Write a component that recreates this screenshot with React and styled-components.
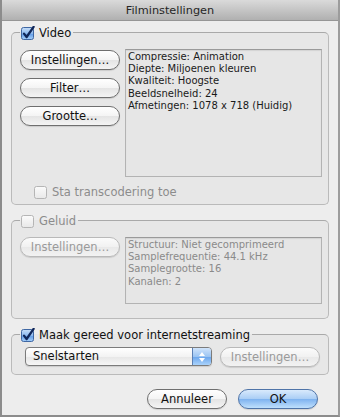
import styled, { createGlobalStyle } from 'styled-components'

const GlobalStyle = createGlobalStyle`
  html, body {
    margin: 0;
    padding: 0;
    background: #ededed;
  }
  body {
    font-family: "DejaVu Sans", "Liberation Sans", sans-serif;
  }
`

const Window = styled.div`
  width: 340px;
  height: 417px;
  box-sizing: border-box;
  border-left: 2px solid #8c8c8c;
  border-right: 2px solid #9c9c9c;
  border-bottom: 2px solid #8c8c8c;
  background: #ededed;
  display: flex;
  flex-direction: column;
`

const TitleBar = styled.div`
  height: 21px;
  box-sizing: border-box;
  flex-shrink: 0;
  border-bottom: 1px solid #969696;
  background: linear-gradient(#dadada, #b0b0b0);
  display: flex;
  align-items: center;
  justify-content: center;
  font-size: 11.3px;
  color: #262626;
`

const Body = styled.div`
  display: flex;
  flex-direction: column;
  gap: 8px;
  padding: 4px 9px 0 9px;
`

const Group = styled.fieldset`
  margin: 0;
  padding: 0;
  min-width: 0;
  border: 1px solid #bababa;
  border-top-color: #a9a9a9;
  border-radius: 5px;
  background: #e7e7e7;
`

const Legend = styled.legend`
  margin-left: 8px;
  padding: 0 2px 0 1px;
  height: 14px;
`

const LegendInner = styled.span`
  display: inline-flex;
  align-items: center;
  gap: 4px;
  height: 14px;
  font-size: 11.5px;
  color: ${p => (p.$disabled ? '#8c8c8c' : '#111')};
`

const Content = styled.div`
  padding: ${p => p.$pad};
  display: flex;
  flex-direction: column;
`

const Row = styled.div`
  display: flex;
  align-items: flex-start;
  gap: ${p => p.$gap || '5px'};
`

const ButtonColumn = styled.div`
  display: flex;
  flex-direction: column;
  gap: 8px;
  margin-top: 1px;
`

const PushButton = styled.button`
  width: ${p => p.$width || '100px'};
  height: 20px;
  box-sizing: border-box;
  padding: 0;
  border-radius: 10px;
  border: 1px solid ${p => (p.disabled ? '#b9b9b9' : '#6f6f6f')};
  background: ${p =>
    p.disabled
      ? 'linear-gradient(#fbfbfb, #f1f1f1 50%, #e9e9e9 51%, #f2f2f2)'
      : 'linear-gradient(#ffffff, #f4f4f4 50%, #e4e4e4 51%, #f4f4f4)'};
  font-family: "DejaVu Sans", "Liberation Sans", sans-serif;
  font-size: 11.5px;
  color: ${p => (p.disabled ? '#9a9a9a' : '#111')};
  box-shadow: 0 1px 1px rgba(0, 0, 0, 0.12);
  flex-shrink: 0;
`

const DefaultButton = styled(PushButton)`
  border-color: #4f74a8;
  background: linear-gradient(#d9eafc, #a9cdf5 50%, #7eb2ef 51%, #bfe0fd);
`

const InfoBox = styled.div`
  flex: 1;
  height: ${p => p.$height};
  box-sizing: border-box;
  border: 1px solid #b3b3b3;
  border-top-color: #9a9a9a;
  background: #e6e6e6;
  padding: 1px 2px;
  font-size: 10px;
  line-height: 12.2px;
  color: ${p => (p.$disabled ? '#8a8a8a' : '#1a1a1a')};
  box-shadow: inset 0 1px 1px rgba(0, 0, 0, 0.08);
`

const CheckRow = styled.div`
  display: flex;
  align-items: center;
  gap: 4px;
  margin-top: 8px;
  margin-left: 14px;
  height: 14px;
  font-size: 11.5px;
  color: #8c8c8c;
`

const Popup = styled.div`
  width: 187px;
  height: 19px;
  box-sizing: border-box;
  border: 1px solid #7b7b7b;
  border-radius: 4px;
  display: flex;
  overflow: hidden;
  background: linear-gradient(#ffffff, #f3f3f3 50%, #e6e6e6 51%, #f6f6f6);
  box-shadow: 0 1px 1px rgba(0, 0, 0, 0.12);
  flex-shrink: 0;
`

const PopupLabel = styled.span`
  flex: 1;
  padding-left: 7px;
  font-size: 11.5px;
  line-height: 17px;
  color: #111;
`

const PopupArrows = styled.span`
  width: 18px;
  border-left: 1px solid #5b80b5;
  background: linear-gradient(#d0e4fb, #9cc5f3 50%, #6aa5ec 51%, #a9d2fb);
  display: flex;
  align-items: center;
  justify-content: center;
`

const Footer = styled.div`
  display: flex;
  justify-content: flex-end;
  gap: 11px;
  margin-top: 6px;
  padding-right: 11px;
`

function CheckBox({ checked, disabled }) {
  if (checked) {
    return (
      <svg width="14" height="14" viewBox="0 0 14 14">
        <defs>
          <linearGradient id="cbOn" x1="0" y1="0" x2="0" y2="1">
            <stop offset="0" stopColor="#c7def8" />
            <stop offset="0.5" stopColor="#8dbaf0" />
            <stop offset="0.51" stopColor="#5f9ae6" />
            <stop offset="1" stopColor="#a6d0fa" />
          </linearGradient>
        </defs>
        <rect x="0.5" y="1.5" width="12" height="12" rx="2" fill="url(#cbOn)" stroke="#3f67a3" />
        <path d="M3 7.6 L5.6 11 L12.6 0.8" fill="none" stroke="#10275a" strokeWidth="2.3" strokeLinecap="round" strokeLinejoin="round" />
      </svg>
    )
  }
  return (
    <svg width="14" height="14" viewBox="0 0 14 14">
      <defs>
        <linearGradient id="cbOff" x1="0" y1="0" x2="0" y2="1">
          <stop offset="0" stopColor="#fbfbfb" />
          <stop offset="1" stopColor="#e8e8e8" />
        </linearGradient>
      </defs>
      <rect x="0.5" y="1.5" width="12" height="12" rx="2" fill="url(#cbOff)" stroke={disabled ? '#b5b5b5' : '#8a8a8a'} />
    </svg>
  )
}

function Arrows() {
  return (
    <svg width="8" height="12" viewBox="0 0 8 12">
      <path d="M4 1 L7 5 L1 5 Z" fill="#ffffff" />
      <path d="M4 11 L7 7 L1 7 Z" fill="#ffffff" />
    </svg>
  )
}

export default function App() {
  return (
    <>
      <GlobalStyle />
      <Window>
        <TitleBar>Filminstellingen</TitleBar>
        <Body>
          <Group>
            <Legend>
              <LegendInner>
                <CheckBox checked />
                Video
              </LegendInner>
            </Legend>
            <Content $pad="10px 6px 5px 8px">
              <Row>
                <ButtonColumn>
                  <PushButton>Instellingen…</PushButton>
                  <PushButton>Filter…</PushButton>
                  <PushButton>Grootte…</PushButton>
                </ButtonColumn>
                <InfoBox $height="128px">
                  Compressie: Animation<br />
                  Diepte: Miljoenen kleuren<br />
                  Kwaliteit: Hoogste<br />
                  Beeldsnelheid: 24<br />
                  Afmetingen: 1078 x 718 (Huidig)
                </InfoBox>
              </Row>
              <CheckRow>
                <CheckBox disabled />
                Sta transcodering toe
              </CheckRow>
            </Content>
          </Group>

          <Group>
            <Legend>
              <LegendInner $disabled>
                <CheckBox disabled />
                Geluid
              </LegendInner>
            </Legend>
            <Content $pad="10px 6px 14px 8px">
              <Row>
                <PushButton disabled>Instellingen…</PushButton>
                <InfoBox $height="67px" $disabled>
                  Structuur: Niet gecomprimeerd<br />
                  Samplefrequentie: 44.1 kHz<br />
                  Samplegrootte: 16<br />
                  Kanalen: 2
                </InfoBox>
              </Row>
            </Content>
          </Group>

          <Group>
            <Legend>
              <LegendInner>
                <CheckBox checked />
                Maak gereed voor internetstreaming
              </LegendInner>
            </Legend>
            <Content $pad="6px 8px 7px 13px">
              <Row $gap="8px">
                <Popup>
                  <PopupLabel>Snelstarten</PopupLabel>
                  <PopupArrows>
                    <Arrows />
                  </PopupArrows>
                </Popup>
                <PushButton disabled>Instellingen…</PushButton>
              </Row>
            </Content>
          </Group>

          <Footer>
            <PushButton $width="80px">Annuleer</PushButton>
            <DefaultButton $width="80px">OK</DefaultButton>
          </Footer>
        </Body>
      </Window>
    </>
  )
}
